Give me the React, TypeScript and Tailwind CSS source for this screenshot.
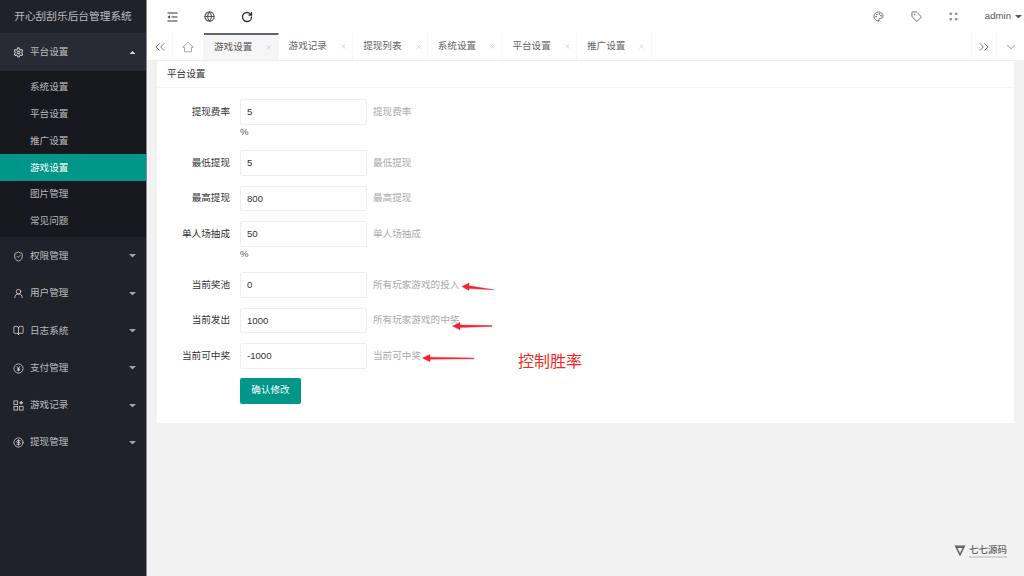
import { Settings, ShieldCheck, UserRound, BookOpen, CircleDollarSign, Globe, RotateCw, Palette, Tag, ChevronsLeft, ChevronsRight, ChevronDown, X } from 'lucide-react';
import type { ReactNode } from 'react';

const FONT = "font-['Liberation_Sans','Noto_Sans_CJK_SC',sans-serif]";

function Caret({ up, className }: { up?: boolean; className?: string }) {
  return (
    <svg viewBox="0 0 8 4" className={`h-[3.5px] w-[7px] ${className ?? ''}`}>
      <path d={up ? 'M0 4L4 0L8 4Z' : 'M0 0L8 0L4 4Z'} fill="currentColor" />
    </svg>
  );
}

function YenIcon() {
  return (
    <svg viewBox="0 0 24 24" className="h-[11px] w-[11px]" fill="none" stroke="currentColor" strokeWidth="2">
      <circle cx="12" cy="12" r="10" />
      <path d="M8.5 7l3.5 5 3.5-5M12 12v6M8.5 13h7M8.5 15.5h7" />
    </svg>
  );
}

function AppsIcon() {
  return (
    <svg viewBox="0 0 24 24" className="h-[11px] w-[11px]" fill="none" stroke="currentColor" strokeWidth="2">
      <rect x="2" y="2" width="8" height="8" />
      <rect x="2" y="14" width="8" height="8" />
      <rect x="14" y="14" width="8" height="8" />
      <path d="M18 2v8M14 6h8" strokeWidth="3" />
    </svg>
  );
}

function ShrinkIcon() {
  return (
    <svg viewBox="0 0 11 10" className="h-[10px] w-[11px]" fill="none" stroke="currentColor" strokeWidth="1.2">
      <path d="M0.5 1H10.5M0.5 9H10.5M4.5 5H10.5" />
      <path d="M3 3.2L0.6 5L3 6.8Z" fill="currentColor" stroke="none" />
    </svg>
  );
}

function HomeIcon() {
  return (
    <svg viewBox="0 0 24 24" className="h-[12px] w-[12px] text-[#888]" fill="none" stroke="currentColor" strokeWidth="1.5">
      <path d="M1.5 12.5L12 2.5L22.5 12.5H19V21.5H5V12.5Z" />
    </svg>
  );
}

function FullscreenIcon() {
  return (
    <svg viewBox="0 0 24 24" className="h-[9px] w-[9px] text-[#666]" fill="none" stroke="currentColor" strokeWidth="2.2">
      <path d="M3 8V3h5M3 3l5 5M21 8V3h-5M21 3l-5 5M3 16v5h5M3 21l5-5M21 16v5h-5M21 21l-5-5" />
    </svg>
  );
}

function NavGroup({ icon, label, open }: { icon: ReactNode; label: string; open?: boolean }) {
  return (
    <div className={`flex items-center pl-[13px] pr-[10px] pt-[1px] text-white/70 ${open ? 'h-[38px] bg-[#282b33]' : 'h-[37.3px]'}`}>
      <span className="flex w-[17px] shrink-0 items-center">{icon}</span>
      <span className="flex-1 text-[9.6px]">{label}</span>
      <Caret up={open} className={open ? 'text-white/80' : 'text-white/60'} />
    </div>
  );
}

const subItems = ['系统设置', '平台设置', '推广设置', '游戏设置', '图片管理', '常见问题'];

function Sidebar() {
  return (
    <aside className="flex w-[147px] shrink-0 flex-col border-r border-[#8a8c90] bg-[#20222a]">
      <div className="flex h-[33px] items-center justify-center bg-[#20222a] text-[10.7px] text-white/70">
        开心刮刮乐后台管理系统
      </div>
      <NavGroup open label="平台设置" icon={<Settings size={11} strokeWidth={2.4} />} />
      <div className="bg-[#18191f] py-[2.6px]">
        {subItems.map((item) => (
          <div
            key={item}
            className={`flex h-[26.8px] items-center pl-[30px] pt-[1px] text-[9.6px] ${
              item === '游戏设置' ? 'bg-[#009688] text-white' : 'text-white/70'
            }`}
          >
            {item}
          </div>
        ))}
      </div>
      <NavGroup label="权限管理" icon={<ShieldCheck size={11} />} />
      <NavGroup label="用户管理" icon={<UserRound size={11} />} />
      <NavGroup label="日志系统" icon={<BookOpen size={11} />} />
      <NavGroup label="支付管理" icon={<YenIcon />} />
      <NavGroup label="游戏记录" icon={<AppsIcon />} />
      <NavGroup label="提现管理" icon={<CircleDollarSign size={11} />} />
    </aside>
  );
}

function TopBar() {
  return (
    <div className="flex h-[33px] shrink-0 items-center bg-white text-[#333]">
      <div className="flex items-center gap-[26px] pl-[20px]">
        <ShrinkIcon />
        <Globe size={11} className="text-[#555]" strokeWidth={2.4} />
        <RotateCw size={12} strokeWidth={2.6} />
      </div>
      <div className="ml-auto flex items-center">
        <Palette size={11} className="mr-[27px] text-[#666]" />
        <Tag size={11} className="mr-[27px] text-[#666]" />
        <FullscreenIcon />
        <span className="ml-[27px] text-[9.6px] text-[#555]">admin</span>
        <Caret className="ml-[4px] mr-[2px] text-[#555]" />
      </div>
    </div>
  );
}

const tabs = ['游戏记录', '提现列表', '系统设置', '平台设置', '推广设置'];

function Tab({ label, active }: { label: string; active?: boolean }) {
  return (
    <div
      className={`flex h-[27px] w-[74.6px] shrink-0 items-center border-r border-[#f6f6f6] pl-[10px] text-[9.6px] ${
        active ? 'border-t-2 border-t-[#60646c] bg-[#f6f6f6] text-[#555]' : 'text-[#666]'
      }`}
    >
      <span>{label}</span>
      <X size={7} className="ml-[13px] text-[#bbb]" />
    </div>
  );
}

function TabBar() {
  return (
    <div className="flex h-[28px] shrink-0 border-b border-[#eee] bg-white text-[#666]">
      <div className="flex w-[26px] items-center justify-center border-r border-[#f6f6f6]">
        <ChevronsLeft size={16} strokeWidth={1.3} />
      </div>
      <div className="flex w-[31px] items-center justify-center border-r border-[#f6f6f6]">
        <HomeIcon />
      </div>
      <Tab label="游戏设置" active />
      {tabs.map((t) => (
        <Tab key={t} label={t} />
      ))}
      <div className="ml-auto flex w-[26px] items-center justify-center border-x border-[#f6f6f6]">
        <ChevronsRight size={16} strokeWidth={1.3} />
      </div>
      <div className="flex w-[27px] items-center justify-center">
        <ChevronDown size={14} strokeWidth={1.2} />
      </div>
    </div>
  );
}

type Field = { label: string; value: string; hint: string; unit?: boolean };

const fields: Field[] = [
  { label: '提现费率', value: '5', hint: '提现费率', unit: true },
  { label: '最低提现', value: '5', hint: '最低提现' },
  { label: '最高提现', value: '800', hint: '最高提现' },
  { label: '单人场抽成', value: '50', hint: '单人场抽成', unit: true },
  { label: '当前奖池', value: '0', hint: '所有玩家游戏的投入' },
  { label: '当前发出', value: '1000', hint: '所有玩家游戏的中奖' },
  { label: '当前可中奖', value: '-1000', hint: '当前可中奖' },
];

function FormRow({ label, value, hint, unit }: Field) {
  return (
    <div className="mb-[10px]">
      <div className="flex h-[25.5px] items-center">
        <label className="w-[73.5px] shrink-0 text-right text-[9.6px] text-[#333]">{label}</label>
        <input
          readOnly
          value={value}
          className="ml-[10px] h-full w-[127px] rounded-[2px] border border-[#eee] bg-white pl-[6px] text-[9.6px] text-[#333] outline-none"
        />
        <span className="ml-[6px] text-[9.6px] text-[#aaa]">{hint}</span>
      </div>
      {unit && <div className="ml-[83.5px] flex h-[15.5px] items-center text-[9.6px] text-[#555]">%</div>}
    </div>
  );
}

function Annotations() {
  return (
    <>
      <svg viewBox="0 0 1024 576" className="pointer-events-none absolute inset-0 h-[576px] w-[1024px]">
        <path d="M462 286.5L469 283L469 285.8L494 289.8L469 288.6L469 290.5Z" fill="#f5222d" stroke="#f5222d" strokeWidth="0.4" />
        <path d="M452.5 326L460 322.5L460 325L492 325.6L492 326.4L460 327.4L460 329.8Z" fill="#f5222d" stroke="#f5222d" strokeWidth="0.4" />
        <path d="M422.5 358L430 354.5L430 357.2L474 358L474 358.8L430 359.2L430 361.8Z" fill="#f5222d" stroke="#f5222d" strokeWidth="0.4" />
      </svg>
      <span className="absolute left-[518px] top-[352px] text-[16px] leading-[20px] text-[#f5281e]">控制胜率</span>
    </>
  );
}

function Watermark() {
  return (
    <div className="absolute left-[954px] top-[545px] flex items-start gap-[3px]">
      <svg viewBox="0 0 12 12" className="h-[12px] w-[12px] text-[#666]">
        <path d="M0.5 0.5H11.5L6 11.5Z" fill="currentColor" />
        <path d="M3.5 3H8.5L6 8Z" fill="#f2f2f2" />
      </svg>
      <div>
        <div className="text-[9.5px] font-medium leading-[9px] text-[#666]">七七源码</div>
        <div className="mt-[1.5px] h-[2px] w-[38px] bg-[#d4d4d4]" />
      </div>
    </div>
  );
}

export default function App() {
  return (
    <div className={`relative flex h-[576px] w-[1024px] overflow-hidden bg-[#f2f2f2] ${FONT}`}>
      <Sidebar />
      <main className="flex min-w-0 flex-1 flex-col">
        <TopBar />
        <TabBar />
        <div className="pl-[9.5px]">
          <section className="h-[362px] w-[857.5px] bg-white">
            <div className="flex h-[27px] items-center border-b border-[#f6f6f6] pl-[10.5px] text-[9.6px] text-[#333]">
              平台设置
            </div>
            <div className="pt-[11px]">
              {fields.map((f) => (
                <FormRow key={f.label} {...f} />
              ))}
              <button className="ml-[83.5px] -mt-[1px] block h-[26px] w-[61px] rounded-[2px] bg-[#009688] text-[9.6px] text-white">
                确认修改
              </button>
            </div>
          </section>
        </div>
      </main>
      <Annotations />
      <Watermark />
    </div>
  );
}
